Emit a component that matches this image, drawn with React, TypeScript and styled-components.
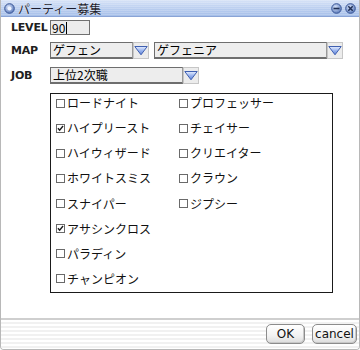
import React from "react";
import styled, { createGlobalStyle } from "styled-components";

const Global = createGlobalStyle`
  html, body { margin: 0; padding: 0; background: #ffffff; }
  body { width: 360px; height: 350px; overflow: hidden; }
`;

const jp = `"Noto Sans CJK JP", "DejaVu Sans", sans-serif`;

const Window = styled.div`
  width: 360px;
  height: 350px;
  box-sizing: border-box;
  display: flex;
  flex-direction: column;
  background: #ffffff;
  border-left: 1px solid #b8b8b8;
  border-right: 1px solid #b8b8b8;
  border-bottom: 1px solid #b8b8b8;
  border-radius: 0 0 4px 4px;
  overflow: hidden;
  font-family: ${jp};
`;

const TitleBar = styled.div`
  height: 17px;
  flex: none;
  display: flex;
  align-items: center;
  padding: 0 3px 0 3px;
  gap: 3px;
  background: repeating-linear-gradient(
      to bottom,
      rgba(255, 255, 255, 0.18) 0px,
      rgba(255, 255, 255, 0.18) 1px,
      rgba(255, 255, 255, 0) 1px,
      rgba(255, 255, 255, 0) 2px
    ),
    linear-gradient(to bottom, #d7e3f7 0%, #b9cdef 55%, #a6bfe9 100%);
  border-bottom: 1px solid #8aa4d6;
  box-sizing: border-box;
`;

const TitleText = styled.span`
  font-size: 12px;
  line-height: 15px;
  height: 15px;
  color: #1c1c2c;
  text-shadow: 0 0 1px #ffffff;
  flex: 1;
  white-space: nowrap;
`;

const TitleIcons = styled.div`
  display: flex;
  gap: 3px;
  align-items: center;
`;

const Body = styled.div`
  flex: 1;
  display: flex;
  flex-direction: column;
  padding: 2px 0 0 10px;
`;

const Row = styled.div<{ $top: number }>`
  display: flex;
  align-items: center;
  margin-top: ${(p) => p.$top}px;
  height: 17px;
`;

const Label = styled.div`
  width: 39px;
  font-family: "DejaVu Sans", sans-serif;
  font-weight: bold;
  font-size: 11px;
  color: #202020;
  letter-spacing: -0.2px;
`;

const LevelInput = styled.div`
  width: 40px;
  height: 15px;
  box-sizing: border-box;
  background: #ececec;
  border: 1px solid #707070;
  font-size: 12px;
  line-height: 13px;
  padding-left: 1px;
  color: #000;
  display: flex;
  align-items: center;
`;

const Caret = styled.span`
  display: inline-block;
  width: 1px;
  height: 12px;
  background: #000;
  margin-left: 1px;
`;

const SelectGroup = styled.div<{ $gap?: number }>`
  display: flex;
  align-items: center;
  margin-right: ${(p) => p.$gap ?? 0}px;
`;

const SelectBox = styled.div<{ $w: number }>`
  width: ${(p) => p.$w}px;
  height: 17px;
  box-sizing: border-box;
  background: #ededed;
  border: 1px solid #9a9a9a;
  border-top-color: #6e6e6e;
  border-left-color: #6e6e6e;
  border-bottom: 2px solid #6e6e6e;
  font-size: 12px;
  line-height: 14px;
  padding-left: 2px;
  color: #000;
  white-space: nowrap;
  overflow: hidden;
`;

const ArrowBtn = styled.div`
  width: 16px;
  height: 17px;
  box-sizing: border-box;
  background: #ececec;
  border: 1px solid #c6c6c6;
  display: flex;
  align-items: center;
  justify-content: center;
`;

const ListBox = styled.div`
  margin-top: 9px;
  margin-left: 39px;
  width: 283px;
  height: 200px;
  box-sizing: border-box;
  border: 1px solid #1a1a1a;
  display: grid;
  grid-template-columns: 123px 1fr;
  grid-auto-rows: 25.15px;
  align-items: start;
  padding: 2px 0 0 5px;
`;

const Item = styled.div`
  height: 14px;
  display: flex;
  align-items: center;
  gap: 2px;
  font-size: 12px;
  line-height: 14px;
  color: #111;
  white-space: nowrap;
`;

const Box = styled.span`
  width: 9px;
  height: 9px;
  box-sizing: border-box;
  border: 1px solid #6a6a6a;
  background: #fff;
  display: inline-flex;
  align-items: center;
  justify-content: center;
  flex: none;
`;

const Footer = styled.div`
  height: 27px;
  flex: none;
  border-top: 2px solid #cfcfcf;
  background: repeating-linear-gradient(
    to bottom,
    #ffffff 0px,
    #ffffff 2px,
    #f1f1f1 2px,
    #f1f1f1 4px
  );
  display: flex;
  justify-content: flex-end;
  align-items: center;
  gap: 7px;
  padding: 0 2px 2px 0;
`;

const Button = styled.div<{ $w: number }>`
  width: ${(p) => p.$w}px;
  height: 20px;
  box-sizing: border-box;
  border: 1px solid #8c8c8c;
  border-radius: 5px;
  background: linear-gradient(to bottom, #ffffff 0%, #f2f2f2 60%, #dcdcdc 100%);
  box-shadow: inset -1px -1px 0 #c8c8c8;
  font-family: "DejaVu Sans", sans-serif;
  font-size: 12px;
  color: #111;
  display: flex;
  align-items: center;
  justify-content: center;
`;

const Arrow = () => (
  <svg width="14" height="11" viewBox="0 0 14 11">
    <defs>
      <linearGradient id="ag" x1="0" y1="0" x2="0" y2="1">
        <stop offset="0" stopColor="#e6eeff" />
        <stop offset="0.5" stopColor="#9ab4ee" />
        <stop offset="1" stopColor="#5a7fd6" />
      </linearGradient>
    </defs>
    <path d="M0.8 1.5 L13.2 1.5 L7 9.8 Z" fill="url(#ag)" stroke="#3f5fb0" strokeWidth="1" strokeLinejoin="round" />
  </svg>
);

const Check = () => (
  <svg width="9" height="9" viewBox="0 0 9 9">
    <path d="M1.2 4.2 L3.4 6.6 L7.8 1.2" fill="none" stroke="#1a1a1a" strokeWidth="1.8" />
  </svg>
);

const Select = ({ w, text, gap }: { w: number; text: string; gap?: number }) => (
  <SelectGroup $gap={gap}>
    <SelectBox $w={w}>{text}</SelectBox>
    <ArrowBtn>
      <Arrow />
    </ArrowBtn>
  </SelectGroup>
);

const CircleIcon = ({ kind }: { kind: "dot" | "min" | "close" }) => (
  <svg width="11" height="11" viewBox="0 0 11 11">
    <defs>
      <radialGradient id={`ci-${kind}`} cx="0.4" cy="0.35" r="0.7">
        <stop offset="0" stopColor="#d8e4fa" />
        <stop offset="1" stopColor="#5676b8" />
      </radialGradient>
    </defs>
    <circle cx="5.5" cy="5.5" r="4.8" fill={`url(#ci-${kind})`} stroke="#3b5797" strokeWidth="1" />
    {kind === "dot" && <circle cx="5.5" cy="5.5" r="2" fill="#eef3ff" />}
    {kind === "min" && <rect x="2.5" y="4.7" width="6" height="1.6" fill="#1f2f55" />}
    {kind === "close" && (
      <path d="M3.3 3.3 L7.7 7.7 M7.7 3.3 L3.3 7.7" stroke="#1f2f55" strokeWidth="1.5" />
    )}
  </svg>
);

const left = [
  { t: "ロードナイト", c: false },
  { t: "ハイプリースト", c: true },
  { t: "ハイウィザード", c: false },
  { t: "ホワイトスミス", c: false },
  { t: "スナイパー", c: false },
  { t: "アサシンクロス", c: true },
  { t: "パラディン", c: false },
  { t: "チャンピオン", c: false },
];
const right = ["プロフェッサー", "チェイサー", "クリエイター", "クラウン", "ジプシー"];

export default function App() {
  const cells: { t: string; c: boolean }[] = [];
  for (let i = 0; i < left.length; i++) {
    cells.push(left[i]);
    cells.push(right[i] ? { t: right[i], c: false } : { t: "", c: false });
  }
  return (
    <>
      <Global />
      <Window>
        <TitleBar>
          <CircleIcon kind="dot" />
          <TitleText>パーティー募集</TitleText>
          <TitleIcons>
            <CircleIcon kind="min" />
            <CircleIcon kind="close" />
          </TitleIcons>
        </TitleBar>
        <Body>
          <Row $top={0}>
            <Label>LEVEL</Label>
            <LevelInput>
              90
              <Caret />
            </LevelInput>
          </Row>
          <Row $top={6}>
            <Label>MAP</Label>
            <Select w={83} text="ゲフェン" gap={5} />
            <Select w={173} text="ゲフェニア" />
          </Row>
          <Row $top={8}>
            <Label>JOB</Label>
            <Select w={133} text="上位2次職" />
          </Row>
          <ListBox>
            {cells.map((c, i) =>
              c.t ? (
                <Item key={i}>
                  <Box>{c.c && <Check />}</Box>
                  {c.t}
                </Item>
              ) : (
                <div key={i} />
              )
            )}
          </ListBox>
        </Body>
        <Footer>
          <Button $w={39}>OK</Button>
          <Button $w={45}>cancel</Button>
        </Footer>
      </Window>
    </>
  );
}
